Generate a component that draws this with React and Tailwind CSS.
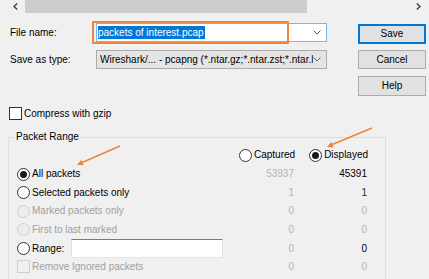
import React from 'react'

const Radio = ({ checked, disabled }) => (
  <span className={`flex items-center justify-center w-[13px] h-[13px] rounded-full border shrink-0 ${disabled ? 'border-[#cfcfcf] bg-[#ececec]' : 'border-[#333333] bg-white'}`}>
    {checked && <span className="w-[7px] h-[7px] rounded-full bg-[#1a1a1a]"></span>}
  </span>
)

const Chevron = () => (
  <svg width="8" height="5" viewBox="0 0 8 5" className="shrink-0">
    <path d="M0.5 0.5 L4 4 L7.5 0.5" fill="none" stroke="#606060" strokeWidth="1" />
  </svg>
)

const rows = [
  { label: 'All packets', kind: 'radio', checked: true, cap: '53937', disp: '45391', dispColor: 'text-black' },
  { label: 'Selected packets only', kind: 'radio', cap: '1', disp: '1', dispColor: 'text-[#1b2a45]' },
  { label: 'Marked packets only', kind: 'radio', disabled: true, cap: '0', disp: '0', dispColor: 'text-[#b4b4b4]' },
  { label: 'First to last marked', kind: 'radio', disabled: true, cap: '0', disp: '0', dispColor: 'text-[#b4b4b4]' },
  { label: 'Range:', kind: 'range', cap: '0', disp: '0', dispColor: 'text-black' },
  { label: 'Remove Ignored packets', kind: 'check', disabled: true, cap: '0', disp: '0', dispColor: 'text-[#b4b4b4]' },
]

const App = () => {
  return (
    <div className="relative w-[429px] h-[279px] overflow-hidden bg-[#f0f0f0] text-black text-[10px] leading-[12px] font-['Liberation_Sans',Arial,sans-serif]">
      {/* scroll strip */}
      <div className="flex h-[13px]">
        <div className="w-[25px] flex items-center pl-[13px]">
          <svg width="5" height="7" viewBox="0 0 5 7">
            <path d="M4.2 0.5 L1 3.5 L4.2 6.5" fill="none" stroke="#404040" strokeWidth="1.4" />
          </svg>
        </div>
        <div className="w-[282px] bg-[#cdcdcd]"></div>
        <div className="flex-1 flex items-center justify-end pr-[8px]">
          <svg width="5" height="7" viewBox="0 0 5 7">
            <path d="M0.8 0.5 L4 3.5 L0.8 6.5" fill="none" stroke="#404040" strokeWidth="1.4" />
          </svg>
        </div>
      </div>

      {/* file name / type + buttons */}
      <div className="flex mt-[10px]">
        <div className="flex flex-col pl-[10px] w-[327px]">
          <div className="flex items-center h-[19px]">
            <span className="w-[86px]">File name:</span>
            <div className="flex items-center justify-between w-[231px] h-[19px] bg-white border border-[#7eb4ea] pl-[1px] pr-[5px]">
              <span className="bg-[#0078d7] text-white leading-[13px] pr-[1px]">packets of interest.pcap</span>
              <Chevron />
            </div>
          </div>
          <div className="flex items-center h-[19px] mt-[8px]">
            <span className="w-[86px]">Save as type:</span>
            <div className="flex items-center justify-between w-[231px] h-[19px] bg-[#e5e5e5] border border-[#acacac] pl-[3px] pr-[5px]">
              <span className="whitespace-nowrap overflow-hidden">Wireshark/... - pcapng (*.ntar.gz;*.ntar.zst;*.ntar.l</span>
              <Chevron />
            </div>
          </div>
        </div>
        <div className="flex flex-col ml-[31px] w-[68px]">
          <button className="mt-[1px] h-[20px] bg-[#e1e1e1] border border-[#0078d7] shadow-[inset_0_0_0_1px_#0078d7] text-[10px]">Save</button>
          <button className="mt-[6px] h-[19px] bg-[#e1e1e1] border border-[#adadad] text-[10px]">Cancel</button>
          <button className="mt-[7px] h-[20px] bg-[#e1e1e1] border border-[#adadad] text-[10px]">Help</button>
        </div>
      </div>

      {/* compress */}
      <div className="flex items-center gap-[2px] mt-[11px] pl-[9px]">
        <span className="w-[13px] h-[13px] bg-white border border-[#333333]"></span>
        <span>Compress with gzip</span>
      </div>

      {/* packet range */}
      <fieldset className="ml-[8px] mt-[11px] w-[378px] h-[160px] border border-[#dcdcdc] px-0">
        <legend className="ml-[6px] px-[1px] leading-[12px]">Packet Range</legend>
        <div className="flex items-center h-[14px] mt-[5px] pl-[230px]">
          <Radio />
          <span className="ml-[2px]">Captured</span>
          <span className="ml-[14px]"><Radio checked /></span>
          <span className="ml-[2px]">Displayed</span>
        </div>
        <div className="flex flex-col mt-[3px] pl-[8px]">
          {rows.map((r) => (
            <div key={r.label} className="grid grid-cols-[227px_50px_73px] items-center h-[18.5px]">
              <div className="flex items-center">
                {r.kind === 'check' ? (
                  <span className="w-[13px] h-[13px] border border-[#cfcfcf] bg-[#f0f0f0] shrink-0"></span>
                ) : (
                  <Radio checked={r.checked} disabled={r.disabled} />
                )}
                <span className={`ml-[2px] ${r.disabled ? 'text-[#a0a0a0]' : ''}`}>{r.label}</span>
                {r.kind === 'range' && (
                  <span className="ml-[7px] w-[152px] h-[19px] bg-white border border-[#e3e3e3] border-t-[#7a7a7a]"></span>
                )}
              </div>
              <span className="text-right text-[#b4b4b4]">{r.cap}</span>
              <span className={`text-right ${r.dispColor}`}>{r.disp}</span>
            </div>
          ))}
        </div>
      </fieldset>

      {/* annotations */}
      <div className="absolute left-[92px] top-[21px] w-[197px] h-[23px] border-2 border-[#f0843a] rounded-[1px] pointer-events-none"></div>
      <svg className="absolute left-0 top-0 pointer-events-none" width="429" height="279">
        <line x1="120" y1="146" x2="81" y2="163" stroke="#f0843a" strokeWidth="1.5" />
        <polygon points="77,165 83.7,165.3 81.3,159.8" fill="#f0843a" />
        <line x1="372" y1="128" x2="331" y2="145" stroke="#f0843a" strokeWidth="1.5" />
        <polygon points="327,147 333.7,147.4 331.4,141.9" fill="#f0843a" />
      </svg>
    </div>
  )
}

export default App
